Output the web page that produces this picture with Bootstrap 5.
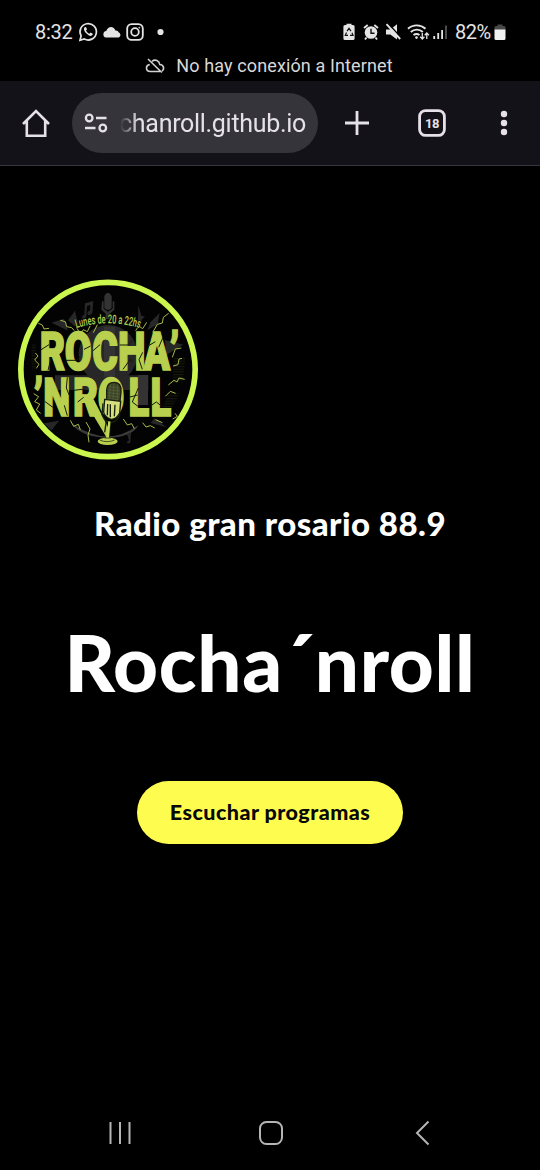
<!DOCTYPE html>
<html lang="es">
<head>
<meta charset="utf-8">
<meta name="viewport" content="width=device-width, initial-scale=1">
<title>Rocha´nroll</title>
<link rel="stylesheet" href="https://cdn.jsdelivr.net/npm/bootstrap@5.3.0/dist/css/bootstrap.min.css">
<style>
  body { background: #000; color: #fff; font-family: Roboto, "Liberation Sans", sans-serif; height: 1170px; overflow: hidden; }
  svg { display: block; flex: none; }
  .statusbar { height: 81px; color: #e4e4e4; }
  .status-row { height: 24px; margin-top: 20px; padding: 0 34px 0 35px; font-size: 20px; line-height: 24px; }
  .offline-row { height: 24px; margin-top: 10px; padding-right: 2px; font-size: 18px; line-height: 24px; gap: 11px; letter-spacing: .12px; color: #d8d8d8; }
  .clock { width: 43px; letter-spacing: -.3px; }
  .percent { width: 39px; letter-spacing: -.5px; margin-left: 8px; }
  .toolbar { height: 85px; background: #131218; border-bottom: 1px solid #38373d; padding: 0 21px; color: #e6e1e9; }
  .address { width: 246px; height: 60px; margin-left: 21px; background: #35343a; padding-left: 11px; }
  .address-text { width: 186px; margin-left: 11px; padding-top: 1px; font-size: 25px; line-height: 36px; letter-spacing: -.3px; white-space: nowrap;
    -webkit-mask-image: linear-gradient(90deg, transparent 0, #000 18px); mask-image: linear-gradient(90deg, transparent 0, #000 18px); }
  .hero { font-family: Lato, sans-serif; }
  .brand-logo { margin: 113px 0 0 18px; }
  .station { margin-top: 43px; font-size: 33px; line-height: 40px; font-weight: 900; letter-spacing: .46px; }
  .show-title { margin-top: 69px; font-size: 78px; line-height: 100px; font-weight: 900; white-space: nowrap; letter-spacing: .7px; }
  .listen-btn, .listen-btn:hover { width: 266px; height: 63px; margin-top: 69px; background: #fffc50; color: #080808; border: 0; font-size: 21.5px; font-weight: 900; line-height: 63px; letter-spacing: .45px; padding: 0; white-space: nowrap; }
  .sysnav { height: 74px; padding: 0 108px; }
</style>
</head>
<body class="d-flex flex-column">
<header>
  <div class="statusbar overflow-hidden">
    <div class="status-row d-flex align-items-center">
      <span class="clock">8:32</span>
      <svg width="20" height="20" viewBox="0 0 20 20" fill="none" stroke="#e4e4e4" stroke-width="1.7"><path d="M2 18.2l1.1-4.3A8.2 8.2 0 1 1 6.3 17z"/><path d="M6.7 5.2c-1.5 1.2-.5 4 1.5 6.1 2.3 2.4 5 3.4 6.2 1.8.7-1 .3-1.4-.5-1.8l-1.3-.7-1.2 1.2c-1.5-.6-2.7-1.7-3.4-3.2L9 7.5 8.3 5.6c-.3-.7-.9-.9-1.6-.4z" fill="#e4e4e4" stroke="none"/></svg>
      <svg class="ms-1" width="20" height="20" viewBox="0 0 20 20" fill="#e4e4e4"><path d="M4 15.5a3.3 3.3 0 0 1 .2-6.5C6.2 3.5 12 4 13.4 8.4c2.2-.2 3 1 3.3 2.1 2.2.5 2.6 4.4-.4 5z"/></svg>
      <svg style="margin-left:4px" width="18" height="18" viewBox="0 0 18 18" fill="none" stroke="#e4e4e4" stroke-width="1.8"><rect x="1.2" y="1.2" width="15.6" height="15.6" rx="4.4"/><circle cx="9" cy="9" r="3.8"/><circle cx="13.3" cy="4.7" r=".5" stroke-width="1"/></svg>
      <svg style="margin-left:12px" width="8" height="8"><circle cx="4.5" cy="4" r="3.1" fill="#e4e4e4"/></svg>

      <svg class="ms-auto" width="12" height="18" viewBox="0 0 12 18"><path d="M3.5 2V.8h5V2H10a1.6 1.6 0 0 1 1.6 1.6v11.8A1.6 1.6 0 0 1 10 17H2a1.6 1.6 0 0 1-1.6-1.6V3.6A1.6 1.6 0 0 1 2 2z" fill="#e4e4e4"/><path d="M4 8.2L6 5.300l2 2.900M9 9.700l1 2.600H7M5 12.300H2.300L3.500 9.500" fill="none" stroke="#111" stroke-width="1.2"/></svg>
      <svg style="margin-left:8px" width="16" height="18" viewBox="0 0 16 18"><circle cx="8" cy="9.500" r="6.300" fill="#e4e4e4"/><path d="M1 5L4.700 2M15 5l-3.700-3M3.500 14.500L2 16.500M12.500 14.500l1.500 2" stroke="#e4e4e4" stroke-width="1.900"/><path d="M8 5.800v4.500h3.500" fill="none" stroke="#111" stroke-width="1.400"/></svg>
      <svg style="margin-left:6px" width="17" height="18" viewBox="0 0 17 18"><path d="M1 6.500h4.300L12 1.300v15.200l-6.700-5H1z" fill="#e4e4e4"/><path d="M3 .4L16.500 15" stroke="#000" stroke-width="1.500"/><path d="M1.500 1.200L15.200 16" stroke="#e4e4e4" stroke-width="1.900"/></svg>
      <svg style="margin-left:5px" width="23" height="18" viewBox="0 0 23 18" fill="none" stroke="#e4e4e4" stroke-width="1.900"><path d="M1 5.800a13 13 0 0 1 17.500 0M3.800 9a8.700 8.700 0 0 1 12 0M6.500 12.100a5 5 0 0 1 6 0"/><circle cx="9.500" cy="14.600" r="1.300" fill="#e4e4e4" stroke="none"/><path d="M15.300 10v6M13.200 13.800l2.100 2.300 2.100-2.300M19.800 16v-6M17.700 12.200l2.100-2.200 2.100 2.200" stroke-width="1.300"/></svg>
      <svg style="margin-left:3px" width="14" height="16" viewBox="0 0 14 16" stroke-width="1.800"><path d="M1.200 12v3M5.200 9v6M9.100 6v9" stroke="#e4e4e4"/><path d="M13 1.500V15" stroke="#555"/></svg>
      <span class="percent">82%</span>
      <svg width="12" height="17" viewBox="0 0 12 17"><path d="M3.500 2V.500h5V2H10a1.500 1.500 0 0 1 1.500 1.500V6H.500V3.500A1.500 1.500 0 0 1 2 2z" fill="#484848"/><path d="M.500 5.500h11v9A1.500 1.500 0 0 1 10 16H2a1.500 1.500 0 0 1-1.500-1.500z" fill="#f2f2f2"/></svg>
    </div>
    <div class="offline-row d-flex justify-content-center align-items-center">
      <svg width="20" height="16" viewBox="0 0 20 16" fill="none" stroke="#d2d2d2" stroke-width="1.600"><path d="M15 13.500H5.200C.500 13.500.200 7.300 4.700 6.600M7 3.300c3.200-2.500 7.200-.600 7.800 3.200 4.300.200 4.800 5 2.100 6.500M3 1l13.800 13.500"/></svg>
      <span>No hay conexión a Internet</span>
    </div>
  </div>
  <nav class="toolbar d-flex align-items-center">
    <svg width="30" height="30" viewBox="0 0 30 30" fill="none" stroke="#e6e1e9" stroke-width="2.600"><path d="M2 16L15 3l13 13M5.800 12.500v15.200h18.400V12.500"/></svg>
    <div class="address rounded-pill d-flex align-items-center">
      <svg width="26" height="24" viewBox="0 0 26 24" fill="none" stroke="#e6e1e9" stroke-width="2.300"><circle cx="6.200" cy="7" r="3.300"/><path d="M13 7h10.500M2 17h10.500"/><circle cx="19.800" cy="17" r="3.300"/></svg>
      <div class="address-text d-flex justify-content-end"><span>chanroll.github.io</span></div>
    </div>
    <svg style="margin-left:26px" width="26" height="26" viewBox="0 0 26 26" stroke="#e6e1e9" stroke-width="2.800"><path d="M13 1v24M1 13h24"/></svg>
    <svg style="margin-left:48px" width="28" height="28" viewBox="0 0 28 28"><rect x="1.600" y="1.600" width="24.800" height="24.800" rx="6" fill="none" stroke="#e6e1e9" stroke-width="2.800"/><text x="14" y="18.800" text-anchor="middle" font-family="Roboto, sans-serif" font-weight="700" font-size="13" letter-spacing="-.5" fill="#e6e1e9">18</text></svg>
    <svg class="ms-auto" width="8" height="26" viewBox="0 0 8 26" fill="#e6e1e9" style="margin-right:11px"><circle cx="4" cy="4" r="3.200"/><circle cx="4" cy="13" r="3.200"/><circle cx="4" cy="22" r="3.200"/></svg>
  </nav>
</header>

<main class="hero flex-grow-1 d-flex flex-column align-items-center text-center">
  <svg class="brand-logo align-self-start" width="180" height="181" viewBox="24 27 540 543">
    <defs>
      <pattern id="mesh" width="6" height="8" patternUnits="userSpaceOnUse"><path d="M0 2h6" stroke="#77803a" stroke-width="1.500"/></pattern>
    </defs>
    <circle cx="294" cy="298" r="262" fill="#030303"/>
    <g fill="#272727">
      <path d="M283 78q10-20 22 0v36q-10 12-22 0zM276 94h5v22l13 9 14-9V94h5v25l-14 12v16h-12v-16l-13-12z" fill="#333"/>
      <path d="M225 100l25-7-3 35q-11 14-15 3 0-9 8-9l1-17-10 3-2 34q-12 10-13 0 0-7 7-8zM385 106l9 31 11 3-9 8-5 16-7-13z"/>
      <path d="M174 151l21-29 12 51-15-6zM125 158l49 24-12-36zM421 157l28-28-6 34-31 18zM465 210l55 14-52 31z"/>
      <circle cx="294" cy="253" r="88"/>
      <path d="M183 459q109 77 202 6c-19 50-164 54-202-6z" fill="#3b3b3b"/>
      <path d="M351 493l12-5-2 30q-11 6-10-3l6-4zM101 460l47-8-24 29zM422 459l48 13-37-27zM135 316h280v44H135z"/>
    </g>
    <path d="M282 170h33v150h-33zM384 315h30v90h-30z" fill="#333"/>
    <path fill="url(#mesh)" opacity=".4" d="M492 260h34l-8 77h-30zM474 370h35l-29 55h-26zM65 222h12v76H65z"/>
    <g fill="none" stroke="#a9b94a" stroke-width="3" stroke-linejoin="round">
      <path d="M85 160l12 5 5 12 15-2M151 151l15 4 4 15 15 3 8 9M199 171l12 22 9-14 12 6 8-17M250 188l12-24M377 182l9-14 12 8 12-19M428 187l14-24 15-4 3-17 16-12M487 262l9-25 18-3M489 288l15-4 3-17 9-2M475 345l17-14 9 5 6-12 17 4M466 379l15-15 16 6M495 430l7 9-14 8M437 449l20 9M398 458l10 13 13-4 13 7M340 447l12 18 13-4 8 15M181 451l10 18 14-6 6 16M228 456l12 21-6 18 3 22M76 249l8 9-10 12 13 13-8 12M71 371l15 9-12 15 15 7-10 18 13 10"/>
    </g>
    <g font-family="Roboto, sans-serif" font-weight="900" fill="#b9cf4e" stroke="#b9cf4e" stroke-width="5">
      <!-- condensed lettering, one x position for each glyph -->
      <text transform="scale(.72 1)" y="301" x="124 228 343 450 556 666" font-size="163">ROCHA’</text>
      <text transform="scale(.72 1)" y="438" x="99 139 262 366 494 585" font-size="160">’NROLL</text>
    </g>
    <path d="M222 389l29-1 47 91-6 27z" fill="#b9cf4e"/>
    <g stroke="#141a0a" stroke-width="3" fill="none">
      <path d="M92 240l25-16M123 265l-9 36M168 271h31l11-9M222 238l20-10M270 224l-22 19M339 298l21-29 9 8M329 225h25l12-15M398 247l-11 22 10 29M414 228l22-13M459 202l-13 30M104 394l29 21M172 322l-3 32 11 27M191 361l34-4M203 396l18-14M385 354l-18 42 17 13M360 381l23-6M424 406l15-10 18 14M172 437l-9-31"/>
    </g>
    <path d="M290 360q1-23 22-23 24 1 21 30l-4 34-39-5z" fill="#3c4427" stroke="#17200d" stroke-width="4"/>
    <path d="M296 350l31 4M293 359l37 4M292 368l38 4M291 377l38 4M291 386l37 4M301 341l-4 50M312 339l-3 55M323 344l-2 52" stroke="#626c3e" stroke-width="1.500"/>
    <path d="M284 388l48 6-3 35q-9 19-26 19-20-8-22-22z" fill="#d5df7c" stroke="#17200d" stroke-width="4"/>
    <path d="M293 402l-1 34M301 403v39M315 404l-2 35M279 400l-3 34q9 23 28 23 19-2 26-25M302 456l-4 46M289 453l-5 34" fill="none" stroke="#17200d" stroke-width="4"/>
    <path d="M298 454l-5 53" stroke="#c8d75b" stroke-width="7"/>
    <ellipse cx="293" cy="514" rx="30" ry="11" fill="#b9cf4e"/>
    <path d="M269 510q22 10 45 0M283 504h20" fill="none" stroke="#48551c" stroke-width="3"/>
    <path id="tag-arc" d="M199 174Q294 146 389 174" fill="none"/>
    <text font-family="Roboto, sans-serif" font-size="37" font-weight="500" fill="#b9cf4e" stroke="#080a05" stroke-width="4" paint-order="stroke" textLength="193" lengthAdjust="spacingAndGlyphs"><textPath href="#tag-arc" textLength="193" lengthAdjust="spacingAndGlyphs">Lunes de 20 a 22hs</textPath></text>
    <circle cx="294" cy="298.500" r="261.500" fill="none" stroke="#cbf64d" stroke-width="17"/>
  </svg>
  <h2 class="station mb-0">Radio gran rosario 88.9</h2>
  <h1 class="show-title mb-0">Rocha´nroll</h1>
  <a class="btn listen-btn rounded-pill" href="#">Escuchar programas</a>
</main>

<footer class="sysnav d-flex justify-content-between align-items-center">
  <svg width="24" height="26" viewBox="0 0 24 26" stroke="#b5b5b5" stroke-width="2"><path d="M2.500 2v22M12 2v22M21.500 2v22"/></svg>
  <svg style="margin-right:4px" width="26" height="26" viewBox="0 0 26 26" fill="none" stroke="#b5b5b5" stroke-width="2"><rect x="2" y="2" width="22" height="22" rx="6.500"/></svg>
  <svg width="18" height="26" viewBox="0 0 18 26" fill="none" stroke="#b5b5b5" stroke-width="2"><path d="M14.500 1.500L3 13l11.500 11.500"/></svg>
</footer>
<script src="https://cdn.jsdelivr.net/npm/bootstrap@5.3.0/dist/js/bootstrap.bundle.min.js"></script>
</body>
</html>
